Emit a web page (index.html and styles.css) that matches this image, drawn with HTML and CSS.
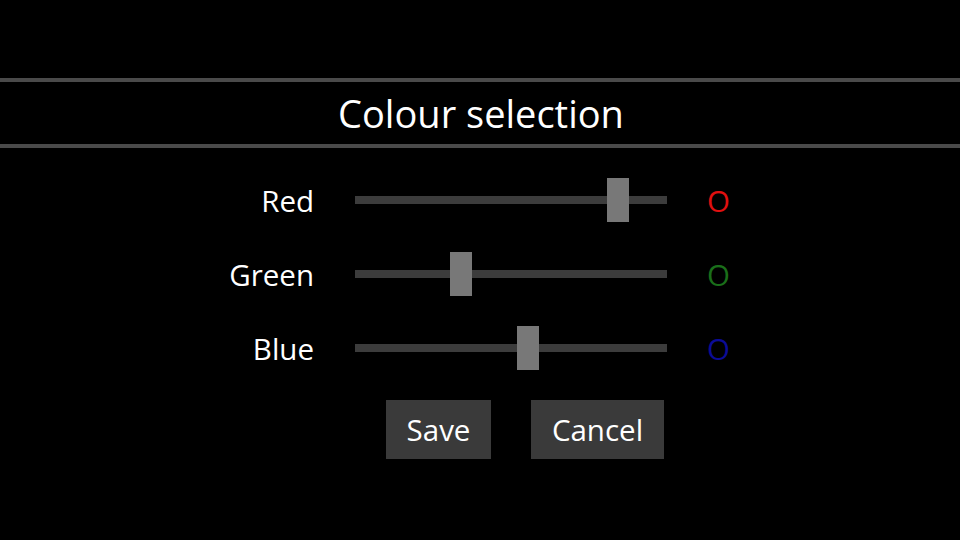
FILE: index.html
```html
<!DOCTYPE html>
<html>
<head>
<meta charset="utf-8">
<link rel="stylesheet" href="styles.css">
</head>
<body>
<div class="header"><h1 class="title">Colour selection</h1></div>
<div class="content">
  <div class="rows">
    <div class="label">Red</div>
    <div class="slider"><div class="track"></div><div class="thumb" style="left: 252px"></div></div>
    <div class="swatch red">O</div>
    <div class="label">Green</div>
    <div class="slider"><div class="track"></div><div class="thumb" style="left: 95px"></div></div>
    <div class="swatch green">O</div>
    <div class="label">Blue</div>
    <div class="slider"><div class="track"></div><div class="thumb" style="left: 162px"></div></div>
    <div class="swatch blue">O</div>
  </div>
  <div class="buttons">
    <button class="btn btn-save">Save</button>
    <button class="btn btn-cancel">Cancel</button>
  </div>
</div>
</body>
</html>
```
FILE: styles.css
```css
html, body {
  margin: 0;
  padding: 0;
  background: #000;
  width: 960px;
  height: 540px;
  overflow: hidden;
  font-family: "Open Sans", "Noto Sans", sans-serif;
  color: #fff;
}
.header {
  margin-top: 78px;
  border-top: 4px solid #4a4a4a;
  border-bottom: 4px solid #4a4a4a;
  height: 62px;
  display: flex;
  align-items: center;
  justify-content: center;
}
.title {
  margin: 0;
  font-weight: 400;
  font-size: 38px;
  line-height: 62px;
  padding-left: 2px;
}
.content {
  padding-top: 30px;
  padding-left: 194px;
}
.rows {
  display: grid;
  grid-template-columns: 120px 312px 60px;
  grid-auto-rows: 44px;
  column-gap: 41px;
  row-gap: 30px;
  align-items: center;
}
.label {
  text-align: right;
  font-size: 29.5px;
  line-height: 44px;
  padding-top: 1px;
}
.slider {
  position: relative;
  height: 44px;
  display: flex;
  align-items: center;
}
.track {
  width: 100%;
  height: 8px;
  background: #3c3c3c;
}
.thumb {
  position: absolute;
  top: 0;
  width: 22px;
  height: 44px;
  background: #787878;
}
.swatch {
  font-size: 29.5px;
  line-height: 44px;
  padding-top: 1px;
  margin-left: -1px;
}
.red { color: #e01010; }
.green { color: #1a6e1a; }
.blue { color: #0c0c96; }
.buttons {
  display: flex;
  gap: 40px;
  margin-top: 30px;
  margin-left: 192px;
}
.btn {
  height: 59px;
  border: none;
  padding: 0;
  margin: 0;
  background: #3a3a3a;
  color: #fff;
  font-family: "Open Sans", "Noto Sans", sans-serif;
  font-size: 29.5px;
  line-height: 59px;
}
.btn-save { width: 105px; }
.btn-cancel { width: 133px; }
```
